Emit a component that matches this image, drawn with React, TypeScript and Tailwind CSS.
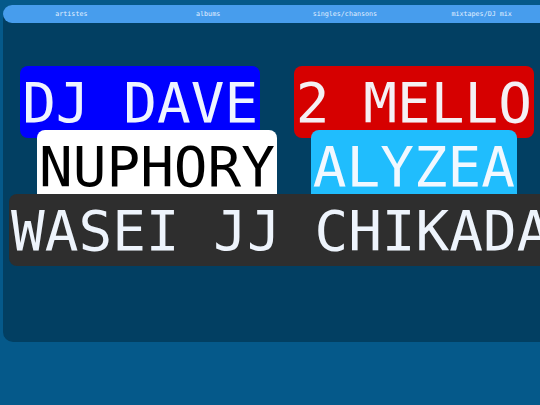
const navItems = ['artistes', 'albums', 'singles/chansons', 'mixtapes/DJ mix'];

const artists = [
  { name: 'DJ DAVE', box: 'bg-[#0000ff] text-[#eef4ff]' },
  { name: '2 MELLO', box: 'bg-[#d60000] text-[#f4f0f4]' },
  { name: 'NUPHORY', box: 'bg-white text-black' },
  { name: 'ALYZEA', box: 'bg-[#20bdfd] text-[#f2f8ff]' },
  { name: 'WASEI JJ CHIKADA', box: 'bg-[#2e2e2e] text-[#eef4fc]' },
];

export default function App() {
  return (
    <div className="w-[540px] h-[405px] overflow-hidden bg-[#05598a] pt-[5px] font-['DejaVu_Sans_Mono',monospace]">
      <div className="ml-[3px] w-[547px] h-[337px] rounded-[10px] bg-[#023f62]">
        {/* nav */}
        <nav className="grid grid-cols-4 h-[18px] items-center rounded-l-full bg-[#479ded]">
          {navItems.map((item) => (
            <span key={item} className="text-center text-[6.7px] leading-none text-[#e2f0ff]">
              {item}
            </span>
          ))}
        </nav>

        {/* artist names */}
        <div className="pt-[47px] pl-[6px] pr-[5px] text-center text-[56px] leading-[64px]">
          {artists.map((a, i) => (
            <span key={a.name}>
              <span className={`${a.box} rounded-lg px-[2px] py-[3.5px] whitespace-nowrap`}>{a.name}</span>
              {i < artists.length - 1 ? ' ' : ''}
            </span>
          ))}
        </div>
      </div>
    </div>
  );
}
